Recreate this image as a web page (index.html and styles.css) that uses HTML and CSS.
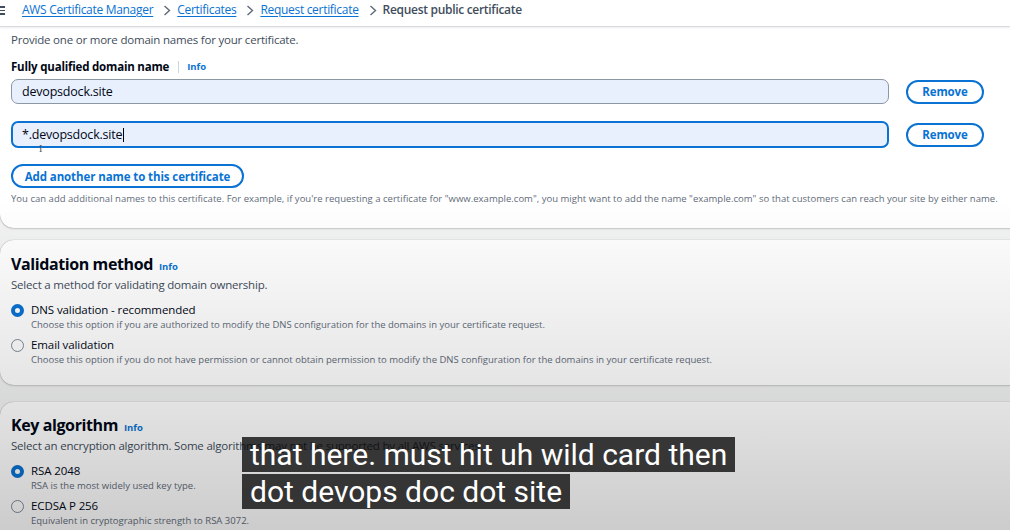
FILE: index.html
```html
<!DOCTYPE html>
<html>
<head>
<meta charset="utf-8">
<link rel="stylesheet" href="styles.css">
</head>
<body>
<header class="topbar">
  <span class="burger"><i></i><i></i><i></i></span>
  <nav class="crumbs">
    <a href="#">AWS Certificate Manager</a>
    <svg class="sep" width="8" height="11" viewBox="0 0 8 11"><path d="M1.5 1l5 4.5-5 4.5" fill="none" stroke="#5f6b7a" stroke-width="1.4"/></svg>
    <a href="#">Certificates</a>
    <svg class="sep" width="8" height="11" viewBox="0 0 8 11"><path d="M1.5 1l5 4.5-5 4.5" fill="none" stroke="#5f6b7a" stroke-width="1.4"/></svg>
    <a href="#">Request certificate</a>
    <svg class="sep" width="8" height="11" viewBox="0 0 8 11"><path d="M1.5 1l5 4.5-5 4.5" fill="none" stroke="#5f6b7a" stroke-width="1.4"/></svg>
    <span class="current">Request public certificate</span>
  </nav>
</header>
<main class="page">
  <section class="card card-domains">
    <p class="intro">Provide one or more domain names for your certificate.</p>
    <div class="field-label"><b>Fully qualified domain name</b><span class="divider"></span><a class="info" href="#">Info</a></div>
    <div class="row">
      <div class="input">devopsdock.site</div>
      <button class="btn">Remove</button>
    </div>
    <div class="row">
      <div class="input focused">*.devopsdock.site<span class="caret"></span><span class="ibeam">I</span></div>
      <button class="btn">Remove</button>
    </div>
    <button class="btn btn-add">Add another name to this certificate</button>
    <p class="hint">You can add additional names to this certificate. For example, if you're requesting a certificate for "www.example.com", you might want to add the name "example.com" so that customers can reach your site by either name.</p>
  </section>

  <section class="card card-validation">
    <h2>Validation method <a class="info" href="#">Info</a></h2>
    <p class="desc">Select a method for validating domain ownership.</p>
    <div class="option">
      <span class="radio on"></span>
      <div><div class="opt-title">DNS validation - recommended</div>
      <div class="opt-desc">Choose this option if you are authorized to modify the DNS configuration for the domains in your certificate request.</div></div>
    </div>
    <div class="option">
      <span class="radio"></span>
      <div><div class="opt-title">Email validation</div>
      <div class="opt-desc">Choose this option if you do not have permission or cannot obtain permission to modify the DNS configuration for the domains in your certificate request.</div></div>
    </div>
  </section>

  <section class="card card-key">
    <h2>Key algorithm <a class="info" href="#">Info</a></h2>
    <p class="desc">Select an encryption algorithm. Some algorithms may not be supported by all AWS services.</p>
    <div class="option">
      <span class="radio on"></span>
      <div><div class="opt-title">RSA 2048</div>
      <div class="opt-desc">RSA is the most widely used key type.</div></div>
    </div>
    <div class="option">
      <span class="radio"></span>
      <div><div class="opt-title">ECDSA P 256</div>
      <div class="opt-desc">Equivalent in cryptographic strength to RSA 3072.</div></div>
    </div>
  </section>
</main>
<div class="shade"></div>
<div class="captions">
  <span class="cap">that here. must hit uh wild card then</span><br>
  <span class="cap">dot devops doc dot site</span>
</div>
</body>
</html>
```
FILE: styles.css
```css
* { box-sizing: border-box; }
html, body { margin: 0; padding: 0; }
body {
  width: 1010px;
  height: 530px;
  overflow: hidden;
  background: #f2f3f3;
  font-family: "Open Sans", "Liberation Sans", sans-serif;
  color: #16191f;
  position: relative;
}
.topbar {
  height: 27px;
  background: #fff;
  border-bottom: 1px solid #d9dcdf;
  box-shadow: 0 1px 2px rgba(0,0,0,0.08);
  display: flex;
  align-items: flex-start;
  position: relative;
  z-index: 2;
}
.burger {
  width: 5px;
  display: flex;
  flex-direction: column;
  gap: 2px;
  margin-top: 6px;
}
.burger i { display: block; height: 1.5px; background: #414d5c; }
.crumbs {
  margin-left: 17px;
  display: flex;
  align-items: center;
  font-size: 12px;
  line-height: 18px;
  margin-top: 1px;
}
.crumbs a { color: #0972d3; text-decoration: underline; text-underline-offset: 2px; letter-spacing: -0.3px; }
.crumbs .sep { margin: 0 6px 0 10px; }
.crumbs .current { color: #414d5c; font-weight: 600; letter-spacing: -0.3px; }

.page { display: flex; flex-direction: column; }
.card {
  background: #fff;
  width: 1040px;
  border-radius: 14px;
  box-shadow: 0 0 1px rgba(0,0,0,0.4), 0 1px 2px rgba(0,0,0,0.15);
  padding: 0 11px;
}
.card-domains {
  border-radius: 0 0 14px 14px;
  padding-top: 5px;
  height: 201px;
}
.intro { margin: 0; font-size: 11.5px; color: #414d5c; line-height: 16px; letter-spacing: -0.2px; }
.field-label {
  margin-top: 11px;
  display: flex;
  align-items: center;
  font-size: 11.5px;
  line-height: 16px;
}
.field-label b { font-weight: 700; color: #000716; letter-spacing: -0.2px; }
.divider { width: 1px; height: 12px; background: #d1d5db; margin: 0 8px 0 9px; }
.info { color: #0972d3; font-weight: 700; font-size: 9.5px; text-decoration: none; }
.row { display: flex; align-items: center; gap: 17px; margin-top: 4px; }
.row + .row { margin-top: 17px; }
.input {
  width: 878px;
  height: 25px;
  border: 1px solid #8c97a4;
  border-radius: 7px;
  background: #e9f0fd;
  font-size: 12.5px;
  padding-left: 10px;
  display: flex;
  align-items: center;
  position: relative;
  color: #000716;
  letter-spacing: -0.2px;
}
.input.focused { border: 2px solid #0972d3; height: 27px; padding-left: 9px; }
.caret { display: inline-block; width: 1px; height: 14px; background: #000; margin-left: 1px; }
.ibeam {
  position: absolute;
  left: 26px;
  top: 20px;
  font-family: "Liberation Serif", serif;
  font-size: 10px;
  color: #555;
}
.btn {
  height: 24px;
  border: 2px solid #0972d3;
  border-radius: 14px;
  background: #fff;
  color: #0972d3;
  font-family: inherit;
  font-weight: 700;
  font-size: 11.5px;
  padding: 0;
  width: 78px;
  display: flex;
  align-items: center;
  justify-content: center;
  white-space: nowrap;
  letter-spacing: -0.1px;
}
.btn-add { width: 233px; margin-top: 16px; }
.hint { margin: 5px 0 0; font-size: 9.5px; color: #5f6b7a; white-space: nowrap; line-height: 12px; letter-spacing: 0.02px; }

.card-validation { margin-top: 12px; height: 145px; padding-top: 14px; }
.card-key { margin-top: 17px; height: 160px; padding-top: 13px; }
h2 {
  margin: 0;
  font-size: 16px;
  font-weight: 700;
  color: #000716;
  line-height: 20px;
  letter-spacing: -0.4px;
  display: flex;
  align-items: baseline;
  gap: 6px;
}
h2 .info { font-size: 9.5px; letter-spacing: 0; }
.desc { margin: 0; font-size: 11.5px; color: #414d5c; line-height: 16px; white-space: nowrap; letter-spacing: -0.2px; }
.option { display: flex; gap: 7px; margin-top: 9px; }
.option + .option { margin-top: 5px; }
.radio {
  flex: none;
  width: 13px;
  height: 13px;
  border-radius: 50%;
  border: 1.5px solid #7d8998;
  background: #fff;
  margin-top: 2px;
}
.radio.on { border: 4px solid #0972d3; }
.opt-title { font-size: 11.5px; line-height: 16px; color: #000716; letter-spacing: -0.1px; }
.opt-desc { font-size: 9.5px; line-height: 14px; color: #5f6b7a; white-space: nowrap; }

.shade {
  position: absolute;
  inset: 0;
  pointer-events: none;
  z-index: 5;
  background: linear-gradient(to bottom, rgba(0,0,0,0) 0px, rgba(0,0,0,0) 200px, rgba(0,0,0,0.03) 260px, rgba(0,0,0,0.11) 400px, rgba(0,0,0,0.2) 530px);
}
.captions {
  position: absolute;
  left: 242px;
  top: 437px;
  z-index: 6;
  font-family: Roboto, "Liberation Sans", sans-serif;
  font-size: 30px;
  line-height: 36.5px;
  color: #fff;
}
.cap {
  background: rgba(8,8,8,0.78);
  padding: 0 8px;
}
```
